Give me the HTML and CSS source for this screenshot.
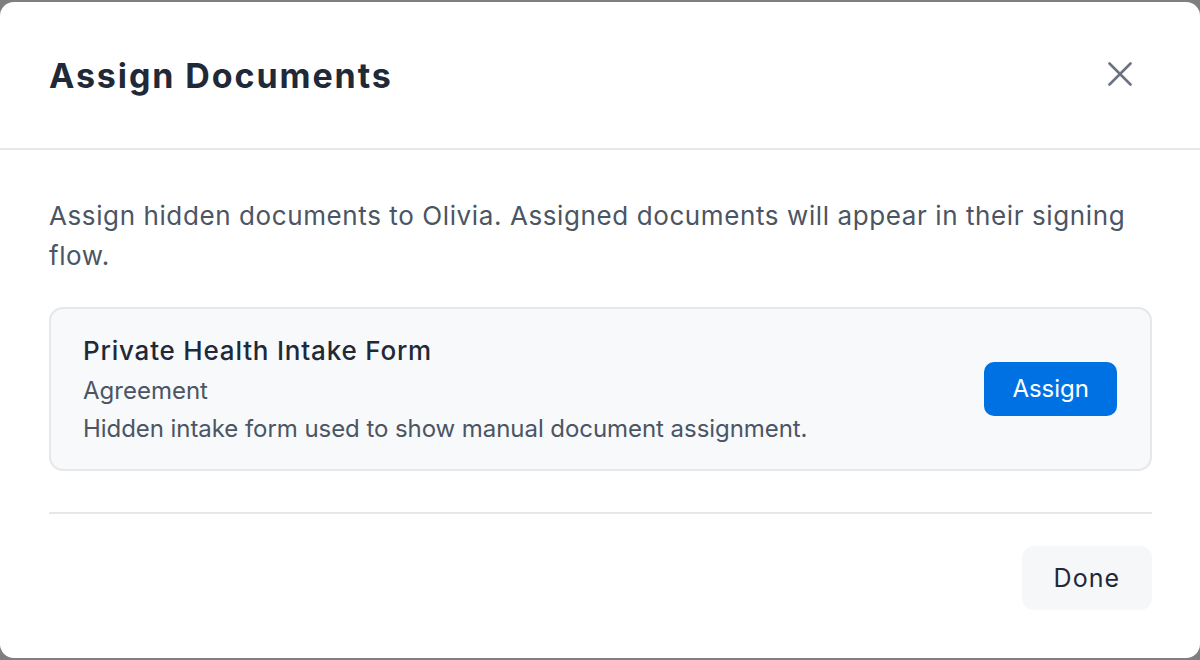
FILE: index.html
```html
<!DOCTYPE html>
<html>
<head>
<meta charset="utf-8">
<link rel="stylesheet" href="styles.css">
</head>
<body>
<div class="modal">
  <div class="header">
    <h1 class="title">Assign Documents</h1>
    <button class="close" aria-label="Close">
      <svg width="24" height="24" viewBox="0 0 24 24" fill="none" stroke="currentColor" stroke-width="2.6" stroke-linecap="round"><path d="M1.5 1.5l21 21M22.5 1.5l-21 21"/></svg>
    </button>
  </div>
  <div class="body">
    <p class="intro">Assign hidden documents to Olivia. Assigned documents will appear in their signing flow.</p>
    <div class="card">
      <div class="card-text">
        <div class="card-title">Private Health Intake Form</div>
        <div class="card-type">Agreement</div>
        <div class="card-desc">Hidden intake form used to show manual document assignment.</div>
      </div>
      <button class="assign">Assign</button>
    </div>
    <div class="footer">
      <button class="done">Done</button>
    </div>
  </div>
</div>
</body>
</html>
```
FILE: styles.css
```css
html, body {
  margin: 0;
  padding: 0;
}
body {
  background: #7f7f7f;
  font-family: Inter, "Noto Sans", sans-serif;
  height: 660px;
  overflow: hidden;
  padding-top: 2px;
  box-sizing: border-box;
}
.modal {
  background: #fff;
  border-radius: 14px;
  height: 656px;
  width: 1200px;
  box-sizing: border-box;
}
.header {
  height: 146px;
  border-bottom: 2px solid #e5e7eb;
  display: flex;
  align-items: center;
  justify-content: space-between;
  padding: 0 68px 0 49px;
}
.title {
  margin: 0;
  font-size: 34px;
  font-weight: 700;
  color: #1f2937;
  letter-spacing: 1.9px;
}
.close {
  border: 0;
  background: none;
  padding: 0;
  color: #6b7280;
  display: flex;
  margin-top: -2px;
}
.body {
  padding: 46px 48px 0 49px;
}
.intro {
  margin: 0;
  font-size: 26px;
  line-height: 40px;
  letter-spacing: 0.6px;
  color: #4b5563;
}
.card {
  margin-top: 31px;
  background: #f8f9fb;
  border: 2px solid #e5e7eb;
  border-radius: 14px;
  padding: 24px 33px 22px 32px;
  display: flex;
  align-items: center;
  justify-content: space-between;
}
.card-title {
  font-size: 26px;
  font-weight: 500;
  line-height: 36px;
  letter-spacing: 0.8px;
  color: #1f2937;
}
.card-type {
  margin-top: 4px;
  font-size: 24px;
  line-height: 36px;
  color: #4b5563;
}
.card-desc {
  margin-top: 2px;
  font-size: 24px;
  line-height: 36px;
  letter-spacing: -0.06px;
  color: #4b5563;
}
.assign {
  border: 0;
  background: #0071e3;
  color: #fff;
  font-family: inherit;
  font-size: 24px;
  line-height: 34px;
  padding: 10px 28px;
  border-radius: 10px;
  margin-top: -2px;
}
.footer {
  margin-top: 41px;
  border-top: 2px solid #e5e7eb;
  padding-top: 32px;
  display: flex;
  justify-content: flex-end;
}
.done {
  border: 0;
  background: #f6f7f9;
  color: #1f2937;
  font-family: inherit;
  font-size: 25px;
  line-height: 36px;
  letter-spacing: 1px;
  padding: 14px 32px;
  border-radius: 12px;
}
```
